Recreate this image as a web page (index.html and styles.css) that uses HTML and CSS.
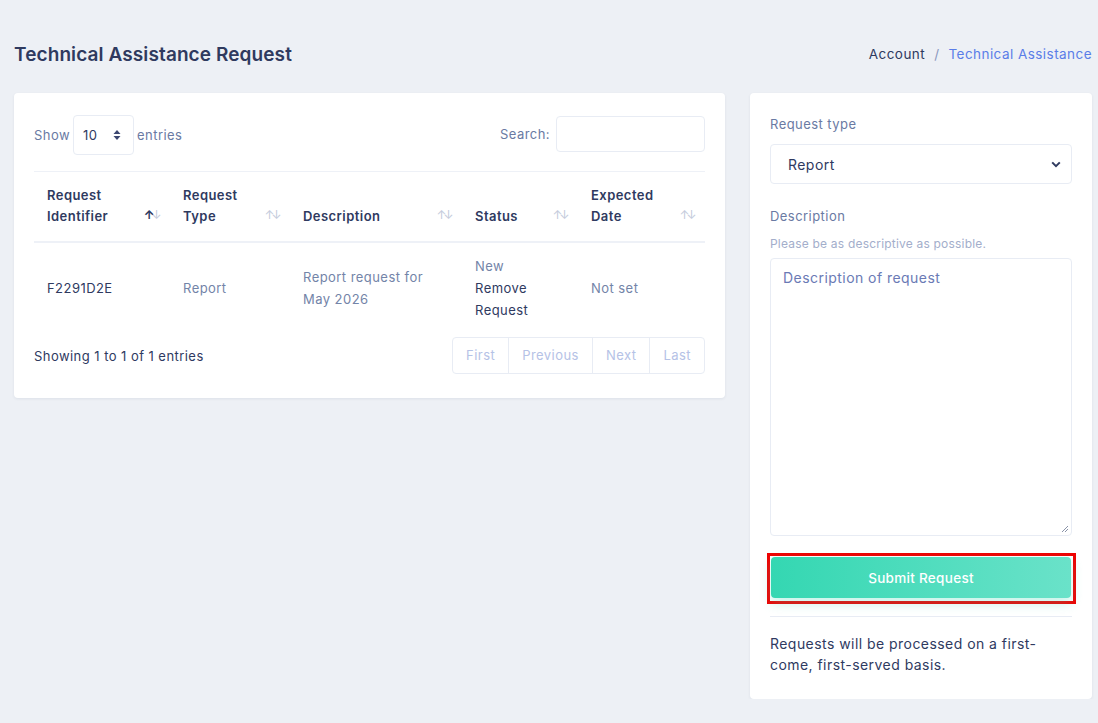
FILE: index.html
```html
<!DOCTYPE html>
<html lang="en">
<head>
  <meta charset="UTF-8" />
  <title>Technical Assistance Request</title>
  <link rel="stylesheet" href="styles.css">
</head>
<body>

  <div class="page-header">
    <h2 class="page-title">Technical Assistance Request</h2>
    <div class="breadcrumb">
      <span class="crumb">Account</span>
      <span class="crumb-sep">/</span>
      <span class="crumb crumb-active">Technical Assistance</span>
    </div>
  </div>

  <div class="page-grid">

    <!-- requests list -->
    <div class="card">
      <div class="dt-top">
        <label class="dt-length">Show
          <span class="dt-select">10
            <svg class="updown" width="8" height="12" viewBox="0 0 8 12"><path d="M4 1 L7.5 5 H0.5 Z M4 11 L0.5 7 H7.5 Z" fill="#3b4670"/></svg>
          </span>
          entries</label>
        <label class="dt-search">Search: <span class="dt-input"></span></label>
      </div>

      <table class="dt-table">
        <colgroup>
          <col style="width:136px">
          <col style="width:120px">
          <col style="width:172px">
          <col style="width:116px">
          <col>
        </colgroup>
        <thead>
          <tr>
            <th class="sorted">Request Identifier</th>
            <th>Request Type</th>
            <th>Description</th>
            <th>Status</th>
            <th>Expected Date</th>
          </tr>
        </thead>
        <tbody>
          <tr>
            <td class="dark">F2291D2E</td>
            <td>Report</td>
            <td>Report request for May 2026</td>
            <td><span class="status">New</span><a class="remove-link">Remove Request</a></td>
            <td>Not set</td>
          </tr>
        </tbody>
      </table>

      <div class="dt-bottom">
        <div class="dt-info">Showing 1 to 1 of 1 entries</div>
        <div class="pager">
          <span class="pager-btn">First</span>
          <span class="pager-btn">Previous</span>
          <span class="pager-btn">Next</span>
          <span class="pager-btn">Last</span>
        </div>
      </div>
    </div>

    <!-- new request form -->
    <div class="card form-card">
      <label class="form-label">Request type</label>
      <div class="form-select">
        <span>Report</span>
        <svg width="10" height="7" viewBox="0 0 10 7"><path d="M1.2 1.4 L5 5.2 L8.8 1.4" fill="none" stroke="#2f3a5f" stroke-width="2"/></svg>
      </div>

      <label class="form-label desc-label">Description</label>
      <div class="form-hint">Please be as descriptive as possible.</div>
      <div class="form-textarea">
        <span class="placeholder">Description of request</span>
        <svg class="grip" width="8" height="8" viewBox="0 0 8 8"><path d="M7 1 L1 7 M7 4 L4 7" stroke="#8a93a8" stroke-width="1"/></svg>
      </div>

      <div class="submit-wrap">
        <button class="submit-btn">Submit Request</button>
      </div>

      <hr class="form-rule">
      <p class="form-note">Requests will be processed on a first-come, first-served basis.</p>
    </div>

  </div>

</body>
</html>
```

FILE: styles.css
```css
/* ===== page ===== */
body {
  margin: 0;
  padding: 0 6px 0 14px;
  background-color: #edf0f5;
  font-family: Inter, "Open Sans", sans-serif;
  font-size: 13px;
  letter-spacing: 0.45px;
  color: #2f3a5f;
}

.page-header {
  display: flex;
  justify-content: space-between;
  align-items: center;
  height: 28px;
  padding-top: 40px;
  margin-bottom: 25px;
}

.page-title {
  margin: 0;
  font-size: 19px;
  font-weight: 600;
  letter-spacing: 0.1px;
  color: #2f3a5f;
}

.breadcrumb {
  display: flex;
  gap: 9px;
  font-size: 13.5px;
  color: #2f3a5f;
}

.crumb-sep {
  color: #8a97bd;
}

.crumb-active {
  color: #5a7de8;
}

.page-grid {
  display: grid;
  grid-template-columns: 711px 342px;
  gap: 25px;
  align-items: start;
}

.card {
  background-color: #fff;
  border-radius: 4px;
  box-shadow: 0 1px 3px rgba(40, 55, 90, 0.08);
  padding: 22px 20px 24px;
}

/* ===== table controls ===== */
.dt-top {
  display: flex;
  justify-content: space-between;
  align-items: flex-start;
  margin-bottom: 16px;
  color: #6a7aa3;
}

.dt-length {
  display: flex;
  align-items: center;
  gap: 3px;
}

.dt-select {
  display: flex;
  align-items: center;
  justify-content: space-between;
  box-sizing: border-box;
  width: 61px;
  height: 40px;
  padding: 0 12px 0 9px;
  border: 1px solid #e8ecf4;
  border-radius: 4px;
  color: #2f3a5f;
}

.dt-search {
  display: flex;
  align-items: center;
  gap: 6px;
  padding-top: 1px;
}

.dt-input {
  display: block;
  box-sizing: border-box;
  width: 149px;
  height: 36px;
  border: 1px solid #e8ecf4;
  border-radius: 4px;
}

/* ===== table ===== */
.dt-table {
  width: 100%;
  table-layout: fixed;
  border-collapse: collapse;
  border-top: 1px solid #eef1f7;
}

.dt-table th {
  position: relative;
  text-align: left;
  font-weight: 600;
  line-height: 21px;
  padding: 13px 30px 14px 13px;
  border-bottom: 2px solid #eef1f7;
  vertical-align: bottom;
  color: #2f3a5f;
}

/* sort arrows */
.dt-table th::before,
.dt-table th::after {
  position: absolute;
  bottom: 20px;
  font-size: 12px;
  line-height: 12px;
  font-weight: 400;
  color: #c4cbdc;
}

.dt-table th::before {
  content: "↑";
  right: 15px;
}

.dt-table th::after {
  content: "↓";
  right: 8px;
}

.dt-table th.sorted::before {
  color: #2f3a5f;
  font-weight: 700;
}

.dt-table td {
  padding: 12px 13px;
  line-height: 22px;
  color: #7384a8;
  vertical-align: middle;
}

.dt-table td.dark {
  color: #2f3a5f;
}

.status {
  display: block;
}

.remove-link {
  display: block;
  color: #2f3a5f;
}

/* ===== footer ===== */
.dt-bottom {
  display: flex;
  justify-content: space-between;
  align-items: center;
  margin-top: 4px;
}

.dt-info {
  color: #2f3a5f;
}

.pager {
  display: flex;
  border: 1px solid #e8ecf4;
  border-radius: 4px;
}

.pager-btn {
  padding: 0 13px;
  height: 35px;
  line-height: 35px;
  color: #b5c2e6;
  border-left: 1px solid #e8ecf4;
}

.pager-btn:first-child {
  border-left: none;
}

/* ===== request form ===== */
.form-card {
  padding: 20px 20px 24px;
}

.form-label {
  display: block;
  line-height: 22px;
  color: #6a7aa3;
  margin-bottom: 9px;
}

.form-select {
  display: flex;
  align-items: center;
  justify-content: space-between;
  box-sizing: border-box;
  height: 40px;
  padding: 0 10px 0 17px;
  border: 1px solid #e8ecf4;
  border-radius: 4px;
  font-size: 14px;
  color: #2f3a5f;
}

.desc-label {
  margin-top: 21px;
  margin-bottom: 9px;
}

.form-hint {
  font-size: 12px;
  line-height: 16px;
  letter-spacing: 0.2px;
  color: #a3aecb;
  margin-bottom: 6px;
}

.form-textarea {
  position: relative;
  box-sizing: border-box;
  height: 278px;
  padding: 8px 12px;
  border: 1px solid #e8ecf4;
  border-radius: 4px;
  font-size: 14px;
  line-height: 22px;
}

.placeholder {
  color: #6a7ab5;
}

.grip {
  position: absolute;
  right: 2px;
  bottom: 2px;
}

.submit-wrap {
  margin: 17px -4px 0 -3px;
  padding: 1px 2px 3px 1px;
  border: 3px solid #f00000;
}

.submit-btn {
  display: block;
  width: 100%;
  height: 41px;
  border: none;
  border-radius: 4px;
  background: linear-gradient(90deg, #34d7b2, #6ae2c9);
  box-shadow: 0 5px 12px rgba(52, 215, 178, 0.3);
  color: #fff;
  font-family: inherit;
  font-size: 13.5px;
  font-weight: 500;
  letter-spacing: 0.3px;
}

.form-rule {
  border: none;
  border-top: 1px solid #e8ecf4;
  margin: 12px 0 0;
}

.form-note {
  margin: 16px 0 0;
  font-size: 14px;
  line-height: 21px;
  color: #2f3a5f;
}
```
